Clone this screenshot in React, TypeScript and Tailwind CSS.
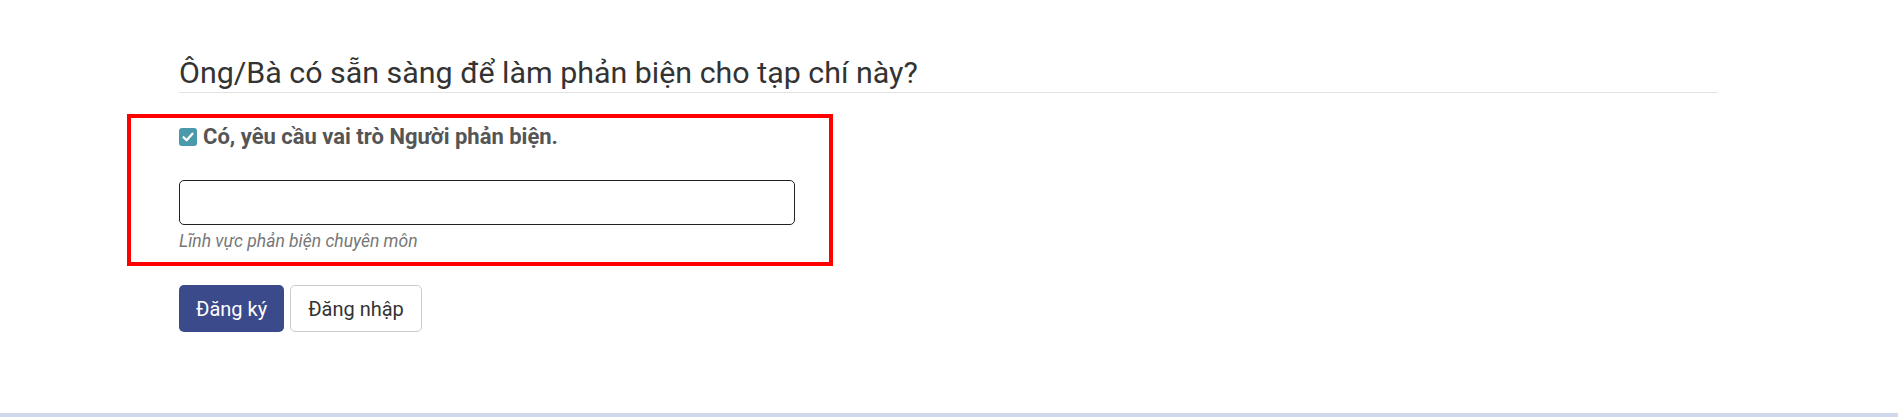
import React from "react";

export default function App() {
  return (
    <div
      className="h-[417px] w-full flex flex-col bg-white"
      style={{ fontFamily: "Roboto, 'Noto Sans', Arial, sans-serif" }}
    >
      <div className="flex flex-col pl-[127px] pt-[55px]">
        <div className="ml-[52px] w-[1539px] border-b border-[#e3e3e3] pb-[1px]">
          <h3 className="text-[30.4px] leading-[36px] font-normal text-[#333333]">
            Ông/Bà có sẵn sàng để làm phản biện cho tạp chí này?
          </h3>
        </div>

        <div className="mt-[21px] w-[706px] border-4 border-[#ff0000] pl-[48px] pt-[7px] pb-[9px] flex flex-col">
          <label className="flex items-center gap-[6px] h-[24px]">
            <span className="w-[18px] h-[18px] rounded-[3px] bg-[#4a9aab] flex items-center justify-center">
              <svg width="14" height="14" viewBox="0 0 12 12" fill="none">
                <path
                  d="M2.2 6.2 L4.8 8.8 L9.8 3.2"
                  stroke="#ffffff"
                  strokeWidth="2"
                  strokeLinecap="round"
                  strokeLinejoin="round"
                />
              </svg>
            </span>
            <span className="text-[22px] leading-[24px] font-bold text-[#555555]">
              Có, yêu cầu vai trò Người phản biện.
            </span>
          </label>

          <input
            type="text"
            className="mt-[31px] w-[616px] h-[45px] border border-[#222222] rounded-[5px] bg-white outline-none"
          />
          <div className="mt-[4px] text-[17.5px] leading-[24px] italic text-[#777777]">
            Lĩnh vực phản biện chuyên môn
          </div>
        </div>

        <div className="ml-[52px] mt-[19px] flex gap-[6px]">
          <button className="h-[47px] px-[17px] rounded-[5px] bg-[#3b4a8b] text-white text-[20px] leading-[24px]">
            Đăng ký
          </button>
          <button className="h-[47px] px-[17px] rounded-[5px] bg-white border border-[#cccccc] text-[#333333] text-[20px] leading-[24px]">
            Đăng nhập
          </button>
        </div>
      </div>

      <div className="mt-auto h-[4px] bg-[#d0d9ec]" />
    </div>
  );
}
